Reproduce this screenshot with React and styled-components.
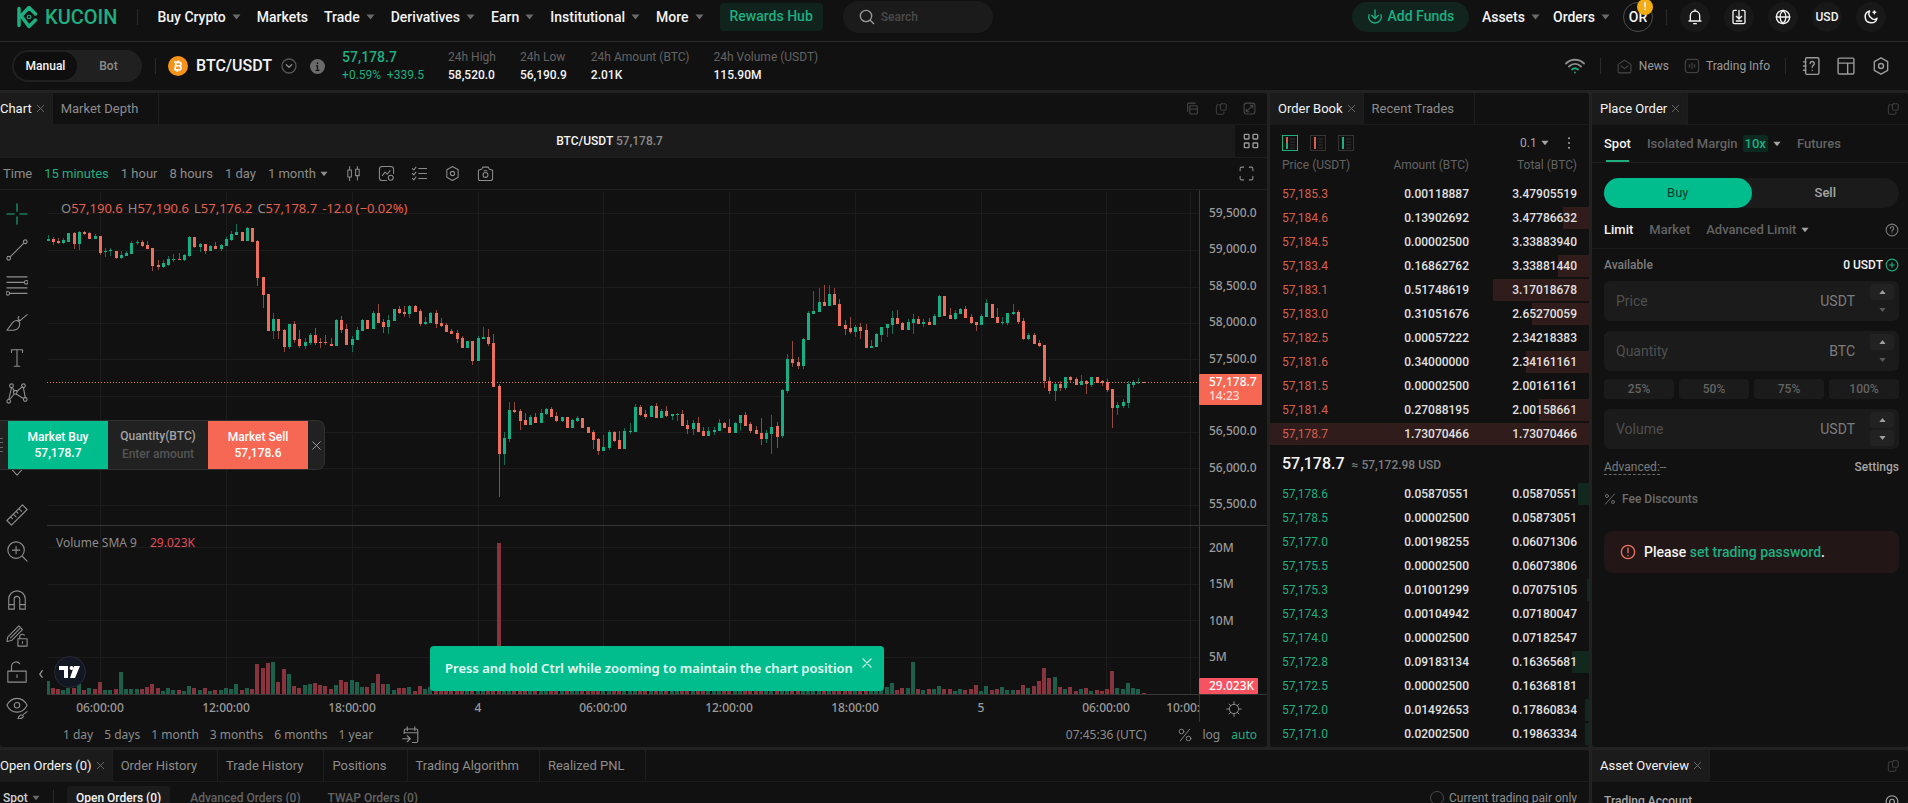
import React from "react";
import styled, { createGlobalStyle, css } from "styled-components";

const GREEN = "#01bc8d";
const GREEN_TEXT = "#1fae80";
const RED = "#f66754";
const INK = "#f3f3f3";
const DIM = "#8c8c8c";
const FAINT = "#636363";
const PANEL = "#111111";
const RAISED = "#1b1b1b";
const LINE = "#222222";
const CHART_FONT = '"Noto Sans", "Open Sans", sans-serif';

const GlobalStyle = createGlobalStyle`
  *, *::before, *::after { box-sizing: border-box; }
  body { margin: 0; background: ${LINE}; color: ${INK}; font: 400 12px/18px Roboto, "Liberation Sans", sans-serif; }
  button, input, select { font: inherit; color: inherit; background: none; border: 0; padding: 0; margin: 0; }
  button { cursor: pointer; white-space: nowrap; }
  a { color: inherit; text-decoration: none; }
  svg { display: block; flex: none; }
`;

/* ---------- icons ---------- */

const Icon = ({ d, size = 18, box = 24, w = 1.5, color = "currentColor", children }) => (
  <svg width={size} height={size} viewBox={`0 0 ${box} ${box}`} fill="none" stroke={color} strokeWidth={w} strokeLinecap="round" strokeLinejoin="round" aria-hidden="true">
    {d && <path d={d} />}
    {children}
  </svg>
);

const Arrow = ({ up, size = 9 }) => (
  <svg width={size} height="6" viewBox="0 0 9 6" fill="currentColor" aria-hidden="true">
    <path d={up ? "M4.5 .5 8.5 5.5h-8z" : "M.5 .5h8L4.5 5.5z"} />
  </svg>
);

const HEX = "M12 2.2 20 6.8v10.4L12 21.8 4 17.2V6.8z";
const CROSS = "M5 5l14 14M19 5L5 19";
const POPOUT = "M10 5H6a2 2 0 0 0-2 2v12a2 2 0 0 0 2 2h9a2 2 0 0 0 2-2v-2M13 3h6a2 2 0 0 1 2 2v7a2 2 0 0 1-2 2h-6a2 2 0 0 1-2-2V5a2 2 0 0 1 2-2z";

/* ---------- page frame ---------- */

const App_ = styled.div`
  display: flex;
  flex-direction: column;
  height: 100vh;
  overflow: hidden;
`;

const TopBar = styled.header`
  display: flex;
  align-items: center;
  justify-content: space-between;
  height: 42px;
  padding: 0 22px 7px 16px;
  background: ${PANEL};
  border-bottom: 1px solid #2c2c2c;
`;

const Row = styled.div`
  display: flex;
  align-items: center;
  gap: ${(p) => p.$gap || 0}px;
`;

const Brand = styled.a`
  display: flex;
  align-items: center;
  gap: 7px;
  color: ${GREEN_TEXT};
  font-size: 20px;
  font-weight: 500;
`;

const Divider = styled.span`
  width: 1px;
  height: ${(p) => p.$h || 16}px;
  background: #2a2a2a;
`;

const Nav = styled.nav`
  display: flex;
  align-items: center;
  gap: 16px;
  margin-left: 19px;
  font-size: 14px;
  font-weight: 500;
`;

const MenuButton = styled.button`
  display: flex;
  align-items: center;
  gap: 6px;
  font-size: 14px;
  font-weight: 500;
  svg { color: #6a6a6a; }
`;

const Rewards = styled.a`
  padding: 0 10px 2px;
  line-height: 26px;
  border-radius: 4px;
  background: #10231d;
  color: ${GREEN_TEXT};
`;

const SearchBox = styled.label`
  display: flex;
  align-items: center;
  gap: 6px;
  width: 150px;
  height: 32px;
  margin-left: 4px;
  padding: 0 16px;
  border-radius: 16px;
  background: ${RAISED};
  color: #9a9a9a;
  input { width: 90px; outline: 0; font-size: 12px; font-weight: 500; }
  input::placeholder { color: #4a4a4a; opacity: 1; }
`;

const Funds = styled.button`
  display: flex;
  align-items: center;
  justify-content: center;
  gap: 5px;
  width: 117px;
  height: 30px;
  border-radius: 15px;
  background: #11241e;
  color: ${GREEN_TEXT};
  font-size: 14px;
  font-weight: 500;
  padding-bottom: 2px;
`;

const Avatar = styled.button`
  position: relative;
  width: 30px;
  height: 30px;
  border: 1px solid #4c4c4c;
  border-radius: 50%;
  font-size: 14px;
  font-weight: 500;
`;

const Badge = styled.span`
  position: absolute;
  top: -4px;
  right: -1px;
  width: 16px;
  height: 16px;
  border-radius: 50%;
  background: #f2ad12;
  color: #fff;
  font-size: 10px;
  line-height: 16px;
`;

const Round = styled.button`
  display: flex;
  align-items: center;
  justify-content: center;
  width: 30px;
  height: 30px;
  border-radius: 50%;
  background: #181818;
  font-size: 12px;
  font-weight: 500;
`;

const PairBar = styled.div`
  display: flex;
  align-items: center;
  justify-content: space-between;
  height: 48px;
  padding: 0 17px 0 12px;
  background: ${PANEL};
`;

const Mode = styled.div`
  display: flex;
  width: 130px;
  height: 32px;
  padding: 2px;
  border-radius: 16px;
  background: #202020;
`;

const ModeButton = styled.button`
  flex: 1;
  border-radius: 14px;
  font-weight: 500;
  background: ${(p) => (p.$on ? "#0e0e0e" : "none")};
  color: ${(p) => (p.$on ? INK : DIM)};
`;

const PairName = styled.h1`
  margin: 0;
  font-size: 16px;
  font-weight: 500;
`;

const Stat = styled.div`
  color: ${FAINT};
  b { display: block; color: ${INK}; font-weight: 500; }
`;

const LastPrice = styled.div`
  color: ${GREEN_TEXT};
  b { display: block; font-size: 14px; font-weight: 500; }
`;

const ToolLink = styled.a`
  display: flex;
  align-items: center;
  gap: 6px;
  color: #9a9a9a;
  svg { color: #4a4a4a; }
`;

const Workspace = styled.main`
  display: grid;
  flex: 1;
  grid-template-columns: minmax(0, 1fr) 319px 316px;
  grid-template-rows: auto minmax(0, 1fr);
  gap: 3px;
  padding-top: 3px;
  min-height: 0;
`;

const Panel = styled.section`
  display: flex;
  flex-direction: column;
  min-width: 0;
  min-height: 0;
  overflow: hidden;
  background: ${PANEL};
  border-radius: 3px;
  grid-column: ${(p) => (p.$wide ? "span 2" : "auto")};
`;

/* ---------- tab strip ---------- */

const Strip = styled.div`
  display: flex;
  height: 32px;
  flex: none;
  align-items: stretch;
  border-bottom: 1px solid #1b1b1b;
`;

const TabButton = styled.button`
  padding: 0 ${(p) => (p.$on ? 6 : 20)}px 0 ${(p) => (p.$edge ? 0 : 8)}px;
  display: flex;
  align-items: center;
  gap: 3px;
  border-right: 1px solid #1e1e1e;
  font-size: 13px;
  font-weight: 400;
  color: ${(p) => (p.$on ? INK : DIM)};
  background: ${(p) => (p.$on ? RAISED : "none")};
  svg { color: #707070; }
`;

const StripTools = styled.div`
  display: flex;
  align-items: center;
  gap: 15px;
  margin-left: auto;
  padding-right: ${(p) => p.$pad || 8}px;
  color: #474747;
`;

const IconButton = styled.button`
  display: flex;
  align-items: center;
  justify-content: center;
`;

const Tabs = ({ items, edge, children, pad }) => (
  <Strip>
    {items.map((t, i) => (
      <TabButton key={t} $on={i === 0} $edge={edge && i === 0}>
        {t}
        {i === 0 && <Icon d={CROSS} size={11} w={2} />}
      </TabButton>
    ))}
    <StripTools $pad={pad}>{children}</StripTools>
  </Strip>
);

const PopOut = ({ label }) => (
  <IconButton aria-label={label}><Icon d={POPOUT} size={14} /></IconButton>
);

/* ---------- chart data ---------- */
/* direction, body top, body bottom, wick top, wick bottom; a unit is a third of a pixel */

const CANDLES = `G177,182,165,184 R177,186,170,194 R183,188,173,192 G181,189,173,192 G159,186,158,186 R158,191,157,206 G156,191,152,209 R155,161,153,166 R158,176,155,177 G168,177,163,178 R168,219,167,224 G212,216,204,232 G211,214,203,227 R213,234,212,236 G226,234,212,237 G218,228,212,229 G189,221,182,222 G185,189,180,194 R185,197,179,200 R195,206,183,208 R204,258,203,272 R256,262,241,269 G250,261,240,263 G237,256,229,257 G236,240,222,245 R236,240,219,240 G225,239,223,244 G171,228,168,230 R171,201,170,203 G192,200,190,216 R192,213,191,222 G199,212,194,213 R198,206,186,208 G195,207,192,213 G177,198,171,199 G161,179,152,184 G156,164,132,166 R156,182,155,184 G144,182,140,184 R144,186,143,187 R183,293,180,318 R291,345,290,383 R342,453,341,454 G417,452,400,476 R417,453,416,476 R450,501,447,517 G433,501,432,508 R432,480,422,490 R477,497,451,503 G486,497,474,508 G465,488,459,494 R465,489,445,495 R486,489,474,503 R486,489,464,496 R492,497,474,498 G420,497,418,498 R420,449,407,460 R447,495,432,496 G477,495,468,516 G450,480,440,480 G420,452,418,453 R420,447,419,448 G399,447,394,448 R399,429,373,430 R426,440,416,458 G420,440,406,461 G388,422,386,423 R387,398,378,402 R396,402,378,411 G378,401,375,413 R378,396,375,397 R393,432,388,437 G426,432,412,434 G399,429,396,430 R399,432,390,443 R429,438,414,440 R435,456,430,457 R453,462,447,463 R459,477,450,488 R474,503,468,504 G483,503,482,504 R483,543,482,555 G474,543,468,544 G471,477,441,478 R471,492,447,499 R489,621,463,622 R618,822,612,950 G774,822,755,855 G690,777,666,785 R690,696,666,699 R693,723,688,750 R720,735,699,736 G711,735,704,736 R711,729,699,730 G699,729,688,730 G687,702,684,706 R687,711,681,712 R708,723,697,727 G711,723,710,725 R711,744,710,745 G720,744,717,745 G714,723,708,727 R714,744,713,745 R741,759,740,760 R756,780,750,807 R777,813,773,825 G801,813,765,814 G756,804,750,811 R756,783,754,785 R780,807,752,808 G753,807,744,808 G753,756,729,762 G681,756,672,757 R681,705,674,708 R702,711,690,718 G678,711,676,712 R678,714,669,715 G693,714,687,715 R693,708,679,712 G702,708,702,720 G702,705,699,723 R702,738,690,739 R735,747,720,762 G729,747,720,765 R729,756,712,757 R753,768,741,769 G753,768,740,769 G750,756,742,766 G729,753,717,754 R729,744,727,745 R741,759,718,760 G729,759,726,760 G705,729,704,753 R705,738,697,739 R732,753,726,758 R750,762,738,763 R759,777,714,795 G759,777,750,788 G741,762,705,822 R738,771,726,804 G630,768,627,774 G537,633,522,640 R537,549,484,562 R546,558,530,567 G477,558,474,566 G399,480,394,481 G393,402,333,403 G366,396,324,397 R366,378,316,379 G342,378,316,379 R342,375,325,376 R372,438,358,439 R435,447,420,465 R444,456,412,462 G441,456,434,471 R441,453,430,476 R450,504,432,505 G498,504,480,505 G462,501,459,502 G441,465,440,486 G432,444,431,471 G414,435,393,462 R414,432,390,433 R429,450,426,451 G426,450,418,451 G417,429,402,462 R417,432,409,433 G426,432,416,441 R426,435,415,436 G408,435,403,436 G348,411,346,412 R348,408,347,409 R405,417,385,418 G399,417,391,421 G387,402,384,403 R387,414,379,415 R411,429,402,432 R426,435,426,452 G408,435,403,436 G369,411,357,412 R372,414,371,415 R411,429,385,430 G426,429,411,435 G399,429,398,435 G396,402,373,406 R396,426,391,432 R423,477,415,480 G465,477,460,480 R465,492,460,493 R489,498,480,501 R495,603,494,624 R603,633,590,642 G612,633,608,663 R612,624,602,632 G591,624,590,630 R591,600,588,606 R597,615,592,616 G603,615,585,616 R603,612,599,642 G591,615,590,621 R591,609,590,610 R603,609,600,618 R606,630,597,635 R627,684,626,744 G675,684,666,704 G666,678,656,684 G612,669,604,684 G606,615,600,624 G606,609,594,612 R606,609,606,609`
  .split(" ")
  .map((s) => ({ up: s[0] === "G", v: s.slice(1).split(",").map(Number) }));

const VOLUME_LEFT = "G39 R18 R15 G13 G18 R18 G30 R12 G18 R14 R36 G12 G12 R15 G66 G15 G15 G15 R15 R21 R30 R18 G9 G18 G12 R12 G10 G24 R18 G12 R18 G9 R12 G12 G18 G16 G30 R12 G18 R15 R90 R78 R93 G96 R36 R75 G60 R24 R18 G27 G30 R33 R27 R24 R15 G27 R42 R36 G42 G36 G21 R21 G33 R60 R30 G30 G12 R18 R18 G21 R9 R24 G15".split(" ");
const VOLUME_RIGHT = "G20 G33 R12 R18 G18 G96 R15 G12 R15 G15 G24 R15 R15 G9 G15 R12 R15 R27 G9 G24 R12 R15 G21 G12 G12 R12 R27 G18 R24 R38 R78 R48 G51 R21 G15 R21 R9 G15 R18 G9 R12 R9 R15 R69 G18 G15 G33 G18 G15 R3".split(" ");
const VOLUME = CANDLES.map((c, i) => {
  const tag = i < 73 ? VOLUME_LEFT[i] : i >= 160 ? VOLUME_RIGHT[i - 160] : null;
  if (tag) return { up: tag[0] === "G", h: Number(tag.slice(1)) / 3 };
  return { up: c.up, h: i === 86 ? 151 : 6 + ((i * 7) % 5) };
});

const xOf = (i) => 1 + Math.floor(i * 5.245);
const H_LINES = [23, 60, 97, 133, 169, 206, 242, 278, 315, 357, 394, 430, 467];
const V_LINES = [53, 179, 305, 431, 556, 682, 808, 934, 1059, 1143];
const TIMES = [[53, "06:00:00"], [179, "12:00:00"], [305, "18:00:00"], [431, "4"], [556, "06:00:00"], [682, "12:00:00"], [808, "18:00:00"], [934, "5"], [1059, "06:00:00"], [1143, "10:00:00"]];
const PRICES = [[23, "59,500.0"], [59, "59,000.0"], [96, "58,500.0"], [132, "58,000.0"], [169, "57,500.0"], [241, "56,500.0"], [278, "56,000.0"], [314, "55,500.0"], [358, "20M"], [394, "15M"], [431, "10M"], [467, "5M"]];

/* ---------- chart ---------- */

const TitleRow = styled.div`
  display: flex;
  height: 32px;
  flex: none;
`;

const TitleBar = styled.div`
  flex: 1;
  text-align: center;
  line-height: 32px;
  font-weight: 500;
  background: ${RAISED};
  color: ${DIM};
  padding-right: 16px;
  b { color: ${INK}; font-weight: 500; }
`;

const GridToggle = styled.button`
  display: flex;
  align-items: center;
  justify-content: center;
  width: 32px;
  color: #9a9a9a;
`;

const Toolbar = styled.div`
  display: flex;
  align-items: center;
  height: 33px;
  flex: none;
  gap: 12px;
  padding: 0 12px 0 3px;
  border-top: 1px solid #1c1c1c;
  border-bottom: 1px solid #202020;
  color: ${DIM};
`;

const Interval = styled.button`
  display: flex;
  align-items: center;
  gap: 4px;
  font-size: 13px;
  color: ${(p) => (p.$on ? GREEN_TEXT : DIM)};
`;

const ChartTools = styled.div`
  display: flex;
  align-items: center;
  gap: 16px;
  margin-left: 5px;
  margin-right: auto;
`;

const ChartBody = styled.div`
  position: relative;
  display: flex;
  flex: 1;
`;

const Rail = styled.div`
  display: flex;
  flex-direction: column;
  width: 47px;
  padding: 6px 13px 0 0;
  color: #8f8f8f;
`;

const Tool = styled.button`
  display: flex;
  align-items: center;
  justify-content: center;
  height: 36px;
  margin-top: ${(p) => (p.$apart ? 13 : 0)}px;
  color: ${(p) => (p.$on ? GREEN_TEXT : "inherit")};
`;

const ChartMain = styled.div`
  position: relative;
  display: flex;
  flex: 1;
  flex-direction: column;
  min-width: 0;
  font-family: ${CHART_FONT};
  color: ${DIM};
`;

const PlotRow = styled.div`
  display: flex;
  height: 505px;
  text { font: 500 12px ${CHART_FONT}; }
`;

const Plot = styled.div`
  flex: 1;
  min-width: 0;
`;

const PriceAxis = styled.div`
  width: 68px;
`;

const TimeRow = styled.div`
  display: flex;
  height: 27px;
  text { font: 500 12px ${CHART_FONT}; }
`;

const AxisCorner = styled.button`
  display: flex;
  align-items: center;
  justify-content: center;
  width: 68px;
  border-left: 1px solid #333;
`;

const RangeRow = styled.div`
  display: flex;
  align-items: center;
  height: 25px;
  gap: 11px;
  padding: 0 10px 0 16px;
`;

const Legend = styled.div`
  position: absolute;
  left: ${(p) => p.$left}px;
  top: ${(p) => p.$top}px;
  display: flex;
  gap: ${(p) => p.$gap}px;
  font-size: ${(p) => p.$size}px;
  white-space: nowrap;
  em { font-style: normal; color: #e5604f; }
  i { font-style: normal; color: #e04c5a; }
`;

const Watermark = styled.a`
  position: absolute;
  left: 7px;
  top: 466px;
  display: flex;
  align-items: center;
  justify-content: center;
  width: 32px;
  height: 32px;
  border-radius: 50%;
  border: 1px solid #262b38;
  background: #131722;
`;

const Collapse = styled.button`
  position: absolute;
  left: 36px;
  top: 479px;
  color: #9a9a9a;
`;

const Toast = styled.div`
  position: absolute;
  left: 50%;
  top: 456px;
  transform: translateX(-50%);
  display: flex;
  justify-content: space-between;
  width: 454px;
  height: 45px;
  padding: 0 10px 0 15px;
  border-radius: 4px;
  background: ${GREEN};
  color: #e4fff6;
  font-size: 13px;
  font-weight: 600;
  line-height: 44px;
  white-space: nowrap;
  button { height: 34px; }
`;

const QuickTrade = styled.div`
  position: absolute;
  left: 0;
  top: 230px;
  display: flex;
  align-items: center;
  height: 50px;
  border: 1px solid #303030;
  border-left: 0;
  border-radius: 0 8px 8px 0;
  background: #212121;
`;

const Grip = styled.span`
  display: flex;
  flex-direction: column;
  gap: 4px;
  width: 8px;
  &::before, &::after { content: ""; width: 3px; height: 5px; border: solid #666; border-width: 1px 0; }
`;

const QuickButton = styled.button`
  width: 100px;
  height: 48px;
  line-height: 16px;
  font-weight: 500;
  color: #fff;
  background: ${(p) => p.$bg};
`;

const QuickField = styled.label`
  display: block;
  width: 100px;
  text-align: center;
  font-weight: 500;
  color: #a3a3a3;
  input { width: 90px; text-align: center; outline: 0; }
  input::placeholder { color: #555; opacity: 1; }
`;

const QuickClose = styled.button`
  display: flex;
  justify-content: center;
  width: 16px;
  color: #b5b5b5;
`;

const PlotDrawing = () => (
  <svg width="100%" height="505" viewBox="0 0 1152 505" preserveAspectRatio="none" shapeRendering="crispEdges" role="img" aria-label="BTC/USDT 15 minute candles and volume">
    {H_LINES.map((y) => <path key={y} d={`M1 ${y}.5H1152`} stroke="#1c1c1c" />)}
    {V_LINES.map((x) => <path key={x} d={`M${x}.5 2V505`} stroke="#1c1c1c" />)}
    <path d="M0 335.5H1152" stroke="#353535" />
    {VOLUME.map((b, i) => (
      <rect key={i} x={xOf(i) - 2} y={Math.round(504 - b.h)} width="4" height={Math.max(1, Math.round(b.h))} fill={b.up ? "#1c604c" : "#87343e"} />
    ))}
    {CANDLES.map(({ up, v: [t, b, h, l] }, i) => {
      const y = (n) => Math.round(n / 3) - 10;
      return (
        <g key={i} fill={up ? "#18ae85" : "#ea6f5f"}>
          <rect x={xOf(i)} y={y(h)} width="1" height={Math.max(1, y(l) - y(h))} opacity="0.6" />
          <rect x={xOf(i) - 1} y={y(t)} width="3" height={Math.max(1, y(b) - y(t))} />
        </g>
      );
    })}
    <path d="M0 192.5H1152" stroke="#d97a6e" strokeDasharray="1 2" />
    <path d="M0 504.5H1152" stroke="#383838" />
  </svg>
);

const PriceScale = () => (
  <svg width="68" height="505" fill="#9a9a9a">
    <path d="M.5 0V505" stroke="#383838" />
    <path d="M0 335.5H68M0 504.5H68" stroke="#353535" />
    {PRICES.map(([y, t]) => <text key={t} x="10" y={y + 4}>{t}</text>)}
    <rect x="0" y="184" width="63" height="31" rx="1" fill={RED} />
    <text x="10" y="196" fill="#fff">57,178.7</text>
    <text x="10" y="210" fill="#ffdcd6">14:23</text>
    <rect x="0" y="488" width="59" height="16" rx="1" fill="#f7525f" />
    <text x="10" y="500" fill="#fff">29.023K</text>
  </svg>
);

const TOOLS = [
  ["Crosshair", <path d="M12 1v8M12 15v8M1 12h8M15 12h8" />],
  ["Trend line", <><circle cx="21" cy="3" r="2" /><circle cx="3" cy="21" r="2" /><path d="M4.5 19.5l15-15" /></>],
  ["Fib retracement", <><path d="M1 2h22M1 8h19M1 14h22M4 20h19" /><circle cx="22" cy="8" r="2" /><circle cx="2" cy="20" r="2" /></>],
  ["Brush", <><path d="M1 21l6-8c3-4 8-3 8 1 0 5-4 7-8 7zM23 4l-7 6c-2 1-4-2-2-4" /></>],
  ["Text", <path d="M6 6V3h12v3M12 3v18M9 21h6" />],
  ["Patterns", <><circle cx="6" cy="3" r="2" /><circle cx="19" cy="3" r="2" /><circle cx="10" cy="10" r="2" /><circle cx="3" cy="20" r="2" /><circle cx="21" cy="18" r="2" /><path d="M6 5l-3 13M7 5l2 4M12 9l6-5M19 5l2 11M11 12l8 5M9 12l-5 6" /></>],
  ["Forecast", <path d="M3 4h18M3 12h18M3 20h18" />],
  ["Icons", <path d="M12 22L3 12C-1 6 8 1 12 7c4-6 13-1 9 5z" />],
  ["Measure", <><path d="M1 18L18 1l5 5L6 23zM5 14l2 2M8 11l3 3M11 8l2 2M14 5l3 3" /></>, true],
  ["Zoom in", <><circle cx="11" cy="11" r="9" /><path d="M11 7v8M7 11h8M18 18l5 5" /></>],
  ["Magnet", <><path d="M3 22V11a9 9 0 0 1 18 0v11h-6V11a3 3 0 0 0-6 0v11zM3 17h6M15 17h6" /></>, true],
  ["Stay in drawing mode", <><path d="M1 18l1-5L14 1l4 4L6 17zM5 14L15 4M13 15h10v8H13zM15 15v-3a3 3 0 0 1 5-1M18 18v2" /></>],
  ["Lock drawings", <><path d="M2 11h20v12H2zM6 11V6a5 5 0 0 1 9-3M12 15v3" /></>],
  ["Hide drawings", <><path d="M1 9c5-10 17-10 22 0-5 10-17 10-22 0z" /><circle cx="12" cy="9" r="3" /><path d="M13 24c1-4 3-5 5-4s0 4-5 4zM19 19l4-3" /></>],
];

const ChartPanel = () => (
  <Panel>
    <Tabs items={["Chart", "Market Depth"]} edge pad={11}>
      <IconButton aria-label="Duplicate"><Icon size={13} d="M7 7h12a2 2 0 0 1 2 2v11a2 2 0 0 1-2 2H9a2 2 0 0 1-2-2zM7 13h14M3 17V4a2 2 0 0 1 2-2h12" w={2} /></IconButton>
      <PopOut label="Pop out chart" />
      <IconButton aria-label="Maximize"><Icon size={13} d="M7 2h10a5 5 0 0 1 5 5v10a5 5 0 0 1-5 5H7a5 5 0 0 1-5-5V7a5 5 0 0 1 5-5zM7 17L17 7M13 6h5v5M6 13v5h5" w={2} /></IconButton>
    </Tabs>
    <TitleRow>
      <TitleBar><b>BTC/USDT</b> 57,178.7</TitleBar>
      <GridToggle aria-label="Chart layout"><Icon size={16} d="M3 2h5a1 1 0 0 1 1 1v5a1 1 0 0 1-1 1H3a1 1 0 0 1-1-1V3a1 1 0 0 1 1-1zM16 2h5a1 1 0 0 1 1 1v5a1 1 0 0 1-1 1h-5a1 1 0 0 1-1-1V3a1 1 0 0 1 1-1zM3 15h5a1 1 0 0 1 1 1v5a1 1 0 0 1-1 1H3a1 1 0 0 1-1-1v-5a1 1 0 0 1 1-1zM16 15h5a1 1 0 0 1 1 1v5a1 1 0 0 1-1 1h-5a1 1 0 0 1-1-1v-5a1 1 0 0 1 1-1z" w={2} /></GridToggle>
    </TitleRow>
    <Toolbar>
      {["Time", "15 minutes", "1 hour", "8 hours", "1 day"].map((t, i) => <Interval key={t} $on={i === 1}>{t}</Interval>)}
      <Interval>1 month <Arrow size={8} /></Interval>
      <ChartTools>
        <IconButton aria-label="Candle style"><Icon size={17} d="M4 7h5v10H4zM6.500 2v5M6.500 17v5M15 6h5v9h-5zM17.500 2v4M17.500 15v6" /></IconButton>
        <IconButton aria-label="Indicators"><Icon size={17} d="M12 22H6a4 4 0 0 1-4-4V6a4 4 0 0 1 4-4h12a4 4 0 0 1 4 4v6M6 15l4-5 3 3 4-5"><circle cx="18" cy="18" r="3.500" /></Icon></IconButton>
        <IconButton aria-label="Orders on chart"><Icon size={17} d="M2 5l2 2 3-4M2 12l2 2 3-4M2 19l2 2 3-4M11 5h11M11 12h11M11 19h11" /></IconButton>
        <IconButton aria-label="Chart settings"><Icon size={17} d={HEX}><circle cx="12" cy="12" r="3" /></Icon></IconButton>
        <IconButton aria-label="Snapshot"><Icon size={17} d="M8 3h8l1 2.500 5 2V19a3 3 0 0 1-3 3H5a3 3 0 0 1-3-3V7.500l5-2z"><circle cx="12" cy="14" r="3.500" /><path d="M10 8h4" /></Icon></IconButton>
      </ChartTools>
      <IconButton aria-label="Full screen"><Icon size={17} d="M3 8V5a2 2 0 0 1 2-2h3M16 3h3a2 2 0 0 1 2 2v3M21 16v3a2 2 0 0 1-2 2h-3M8 21H5a2 2 0 0 1-2-2v-3" /></IconButton>
    </Toolbar>
    <ChartBody>
      <Rail>
        {TOOLS.map(([label, art, apart], i) => (
          <Tool key={label} aria-label={label} $on={i === 0} $apart={apart}><Icon size={22} w={1.2}>{art}</Icon></Tool>
        ))}
      </Rail>
      <Collapse aria-label="Hide toolbar"><Icon size={10} d="M15 4L9 12l6 8" w={3} /></Collapse>
      <ChartMain>
        <PlotRow>
          <Plot><PlotDrawing /></Plot>
          <PriceAxis><PriceScale /></PriceAxis>
        </PlotRow>
        <TimeRow>
          <Plot>
            <svg width="100%" height="27" fill="#9a9a9a" textAnchor="middle">
              {TIMES.map(([x, t]) => <text key={x} x={`${(x / 1152) * 100}%`} y="17">{t}</text>)}
            </svg>
          </Plot>
          <AxisCorner aria-label="Scale settings"><Icon size={16}><circle cx="12" cy="12" r="7" /><path d="M12 5V1M12 19v4M5 12H1M19 12h4M7 7L4.500 4.500M17 7l2.500-2.500M7 17l-2.500 2.500M17 17l2.500 2.500" /></Icon></AxisCorner>
        </TimeRow>
        <RangeRow>
          {["1 day", "5 days", "1 month", "3 months", "6 months", "1 year"].map((t) => <button key={t}>{t}</button>)}
          <ChartRangeIcon aria-label="Go to date"><Icon size={18} d="M3 10V6a2 2 0 0 1 2-2h14a2 2 0 0 1 2 2v14a2 2 0 0 1-2 2h-5M3 9h18M7 1v5M17 1v5M1 17h9M7 13l4 4-4 4" /></ChartRangeIcon>
          <Clock>07:45:36 (UTC)</Clock>
          <Icon size={14} w={1.6}><circle cx="6" cy="6" r="4" /><circle cx="18" cy="18" r="4" /><path d="M20 2L4 22" /></Icon>
          <button>log</button>
          <AutoButton>auto</AutoButton>
        </RangeRow>
        <Legend $left={14} $top={9} $gap={5} $size={13}>
          {[["O", "57,190.6"], ["H", "57,190.6"], ["L", "57,176.2"], ["C", "57,178.7"]].map(([k, v]) => <span key={k}>{k}<em>{v}</em></span>)}
          <em>-12.0 (−0.02%)</em>
        </Legend>
        <Legend $left={9} $top={344} $gap={13} $size={12}><span>Volume SMA 9</span><i>29.023K</i></Legend>
        <Watermark href="#" aria-label="TradingView"><svg width="22" height="14" viewBox="0 0 22 14" fill="#fff"><path d="M0 1h9v12H5V5H0zM15 1h6l-5 12h-5z" /><circle cx="12.500" cy="3" r="2" /></svg></Watermark>
        <Toast role="status">Press and hold Ctrl while zooming to maintain the chart position<button aria-label="Dismiss"><Icon size={14} d={CROSS} w={2} /></button></Toast>
      </ChartMain>
      <QuickTrade>
        <Grip />
        <QuickButton $bg={GREEN}>Market Buy<br />57,178.7</QuickButton>
        <QuickField>Quantity(BTC)<input placeholder="Enter amount" /></QuickField>
        <QuickButton $bg={RED}>Market Sell<br />57,178.6</QuickButton>
        <QuickClose aria-label="Close quick trade"><Icon size={13} d={CROSS} /></QuickClose>
      </QuickTrade>
    </ChartBody>
  </Panel>
);

const ChartRangeIcon = styled.button`
  margin-left: 18px;
`;

const Clock = styled.span`
  margin-left: auto;
  margin-right: 20px;
`;

const AutoButton = styled.button`
  color: ${GREEN_TEXT};
`;

/* ---------- order book ---------- */

const ASKS = [
  ["57,185.3", "0.00118887", "3.47905519", 0], ["57,184.6", "0.13902692", "3.47786632", 26], ["57,184.5", "0.00002500", "3.33883940", 0],
  ["57,183.4", "0.16862762", "3.33881440", 31], ["57,183.1", "0.51748619", "3.17018678", 96], ["57,183.0", "0.31051676", "2.65270059", 57],
  ["57,182.5", "0.00057222", "2.34218383", 0], ["57,181.6", "0.34000000", "2.34161161", 63], ["57,181.5", "0.00002500", "2.00161161", 0],
  ["57,181.4", "0.27088195", "2.00158661", 50], ["57,178.7", "1.73070466", "1.73070466", 319],
];
const BIDS = [
  ["57,178.6", "0.05870551", "0.05870551", 11], ["57,178.5", "0.00002500", "0.05873051", 0], ["57,177.0", "0.00198255", "0.06071306", 0],
  ["57,175.5", "0.00002500", "0.06073806", 0], ["57,175.3", "0.01001299", "0.07075105", 2], ["57,174.3", "0.00104942", "0.07180047", 0],
  ["57,174.0", "0.00002500", "0.07182547", 0], ["57,172.8", "0.09183134", "0.16365681", 17], ["57,172.5", "0.00002500", "0.16368181", 0],
  ["57,172.0", "0.01492653", "0.17860834", 4], ["57,171.0", "0.02002500", "0.19863334", 4],
];

const BookTools = styled.div`
  display: flex;
  align-items: center;
  height: 31px;
  gap: 12px;
  padding: 5px 12px 0;
`;

const BookView = styled.button`
  width: 16px;
  height: 16px;
  border: 1px solid ${(p) => (p.$on ? GREEN_TEXT : "#333")};
`;

const PrecisionPick = styled.label`
  display: flex;
  align-items: center;
  gap: 3px;
  margin-left: auto;
  color: #a5a5a5;
  select { appearance: none; outline: 0; width: 18px; font-size: 12px; }
`;

const BookTable = styled.table`
  width: 100%;
  table-layout: fixed;
  border-collapse: collapse;
  th { height: 26px; padding: 0; vertical-align: top; text-align: right; font-weight: 400; color: ${FAINT}; }
  td { height: 24px; padding: 0; text-align: right; font-weight: 500; color: #e0e0e0; }
  th:nth-child(1), td:nth-child(1) { width: 90px; padding-left: 12px; text-align: left; }
  th:nth-child(2) { width: 109px; }
  th:nth-child(3), td:nth-child(3) { padding-right: 12px; }
`;

const BookRow = styled.tr`
  background: linear-gradient(${(p) => (p.$buy ? "#12281f, #12281f" : "#301c1a, #301c1a")}) right center / var(--depth) 22px no-repeat;
  td:first-child { font-weight: 400; color: ${(p) => (p.$buy ? GREEN_TEXT : "#d65f4f")}; }
`;

const MidCell = styled.td`
  && { height: 36px; }
  color: ${FAINT};
  b { margin-right: 7px; font-size: 16px; font-weight: 500; color: ${INK}; }
  span { color: #7c7c7c; }
`;

const Rows = ({ data, buy }) => (
  <tbody>
    {data.map(([p, a, t, d]) => (
      <BookRow key={p} $buy={buy} style={{ "--depth": `${(d / 319) * 100}%` }}><td>{p}</td><td>{a}</td><td>{t}</td></BookRow>
    ))}
  </tbody>
);

const ViewArt = ({ top, bottom }) => (
  <svg width="14" height="14" viewBox="0 0 14 14" strokeWidth="2">
    <path d="M4 1v6" stroke={top} /><path d="M4 7v6" stroke={bottom} />
    <path d="M7 3h5M7 6h5M7 9h5M7 12h5" stroke="#333" strokeWidth="1" />
  </svg>
);

const BookPanel = () => (
  <Panel>
    <Tabs items={["Order Book", "Recent Trades"]} />
    <BookTools>
      <BookView $on aria-label="Both sides"><ViewArt top="#d65f4f" bottom={GREEN_TEXT} /></BookView>
      <BookView aria-label="Asks only"><ViewArt top="#d65f4f" bottom="#d65f4f" /></BookView>
      <BookView aria-label="Bids only"><ViewArt top={GREEN_TEXT} bottom={GREEN_TEXT} /></BookView>
      <PrecisionPick><select aria-label="Precision"><option>0.1</option></select><Arrow size={8} /></PrecisionPick>
      <IconButton aria-label="More options"><Icon size={16} color="none"><g fill="#a5a5a5"><circle cx="12" cy="5" r="1.500" /><circle cx="12" cy="12" r="1.500" /><circle cx="12" cy="19" r="1.500" /></g></Icon></IconButton>
    </BookTools>
    <BookTable>
      <thead><tr><th>Price (USDT)</th><th>Amount (BTC)</th><th>Total (BTC)</th></tr></thead>
      <Rows data={ASKS} />
      <tbody><tr><MidCell colSpan={3}><b>57,178.7</b><span>≈ 57,172.98 USD</span></MidCell></tr></tbody>
      <Rows data={BIDS} buy />
    </BookTable>
  </Panel>
);

/* ---------- order form ---------- */

const Markets = styled.div`
  display: flex;
  align-items: center;
  height: 38px;
  gap: 16px;
  padding: 0 12px;
  border-bottom: 1px solid #1e1e1e;
`;

const MarketTab = styled.button`
  position: relative;
  display: flex;
  align-items: center;
  gap: 5px;
  height: 36px;
  font-size: 13px;
  font-weight: 500;
  color: ${(p) => (p.$on ? INK : FAINT)};
  svg { color: #a5a5a5; }
  ${(p) => p.$underline && css`
    &::after { content: ""; position: absolute; left: 2px; right: 2px; bottom: 0; height: 2px; background: ${GREEN_TEXT}; }
  `}
`;

const Leverage = styled.span`
  padding: 0 2px;
  line-height: 17px;
  border-radius: 2px;
  background: #0d2a20;
  color: ${GREEN_TEXT};
`;

const Form = styled.form`
  display: flex;
  flex-direction: column;
  padding: 15px 9px 0 12px;
`;

const Sides = styled.div`
  display: flex;
  height: 30px;
  border-radius: 15px;
  background: ${RAISED};
`;

const Side = styled.button`
  flex: 1;
  border-radius: 15px;
  font-size: 13px;
  font-weight: ${(p) => (p.$on ? 400 : 500)};
  background: ${(p) => (p.$on ? GREEN : "none")};
  color: ${(p) => (p.$on ? "#0b3b2e" : "#a5a5a5")};
`;

const Types = styled.div`
  display: flex;
  align-items: center;
  gap: 16px;
  height: 41px;
  margin: 0 -9px 0 -12px;
  padding: 3px 9px 0 12px;
  border-bottom: 1px solid #1b1b1b;
  color: #777;
  > :last-child { margin-left: auto; }
`;

const Available = styled.div`
  display: flex;
  align-items: center;
  height: 32px;
  gap: 2px;
  font-weight: 500;
  color: #7c7c7c;
  b { margin-left: auto; font-weight: 500; color: ${INK}; }
  button { color: ${GREEN_TEXT}; }
`;

const Field = styled.label`
  display: flex;
  align-items: center;
  height: 40px;
  margin-bottom: ${(p) => p.$after}px;
  padding: 0 5px 0 12px;
  border-radius: 6px;
  background: ${RAISED};
  color: #7c7c7c;
  font-size: 14px;
  input { flex: 1; min-width: 0; outline: 0; color: ${INK}; }
  input::placeholder { color: #4f4f4f; opacity: 1; }
`;

const Stepper = styled.span`
  display: flex;
  flex-direction: column;
  gap: 2px;
  margin-left: 15px;
  button { display: flex; align-items: center; justify-content: center; width: 24px; height: 16px; border-radius: 3px; background: #222; color: #a0a0a0; }
  button:last-child { background: ${(p) => (p.$live ? "#222" : "none")}; color: ${(p) => (p.$live ? "#a0a0a0" : "#5a5a5a")}; }
`;

const Shares = styled.div`
  display: flex;
  gap: 5px;
  margin-bottom: 10px;
  button { flex: 1; height: 20px; border-radius: 4px; background: ${RAISED}; color: ${FAINT}; font-weight: 500; }
`;

const Footer = styled.div`
  display: flex;
  align-items: center;
  justify-content: space-between;
  height: 35px;
  color: #7c7c7c;
  u { text-decoration: none; border-bottom: 1px dashed #6a6a6a; }
  button { font-weight: 500; color: #a5a5a5; }
`;

const Discounts = styled.a`
  display: flex;
  align-items: center;
  gap: 6px;
  height: 30px;
  font-weight: 500;
  color: #6c6c6c;
`;

const Notice = styled.p`
  display: flex;
  align-items: center;
  gap: 8px;
  height: 42px;
  margin: 17px 0 0;
  padding: 0 16px;
  border-radius: 8px;
  background: #221617;
  font-size: 14px;
  font-weight: 500;
  a { color: ${GREEN_TEXT}; }
  svg { color: #e8715f; }
`;

const AmountField = ({ label, unit, after, live }) => (
  <Field $after={after}>
    <input placeholder={label} aria-label={label} />
    {unit}
    <Stepper $live={live}>
      <button type="button" aria-label={`Raise ${label}`}><Arrow up size={7} /></button>
      <button type="button" aria-label={`Lower ${label}`}><Arrow size={7} /></button>
    </Stepper>
  </Field>
);

const PercentArt = () => <Icon size={12} w={2}><circle cx="6" cy="6" r="3" /><circle cx="18" cy="18" r="3" /><path d="M21 2L3 22" /></Icon>;

const OrderPanel = () => (
  <Panel>
    <Tabs items={["Place Order"]}><PopOut label="Pop out order form" /></Tabs>
    <Markets>
      <MarketTab $on $underline>Spot</MarketTab>
      <MarketTab>Isolated Margin <Leverage>10x</Leverage><Arrow size={8} /></MarketTab>
      <MarketTab>Futures</MarketTab>
    </Markets>
    <Form onSubmit={(e) => e.preventDefault()}>
      <Sides><Side type="button" $on>Buy</Side><Side type="button">Sell</Side></Sides>
      <Types>
        <MarketTab type="button" $on>Limit</MarketTab>
        <MarketTab type="button">Market</MarketTab>
        <MarketTab type="button">Advanced Limit <Arrow size={8} /></MarketTab>
        <IconButton type="button" aria-label="Help"><Icon size={14} w={2}><circle cx="12" cy="12" r="10" /><path d="M9 9.500a3 3 0 1 1 4 2.700c-1 .5-1 1-1 1.800M12 17v.2" /></Icon></IconButton>
      </Types>
      <Available>Available<b>0 USDT</b><IconButton type="button" aria-label="Add funds"><Icon size={14} w={2}><circle cx="12" cy="12" r="10" /><path d="M12 8v8M8 12h8" /></Icon></IconButton></Available>
      <AmountField label="Price" unit="USDT" after={10} />
      <AmountField label="Quantity" unit="BTC" after={8} />
      <Shares>{["25%", "50%", "75%", "100%"].map((s) => <button type="button" key={s}>{s}</button>)}</Shares>
      <AmountField label="Volume" unit="USDT" after={0} live />
      <Footer><span><u>Advanced:</u>--</span><button type="button">Settings</button></Footer>
      <Discounts href="#"><PercentArt />Fee Discounts</Discounts>
      <Notice>
        <Icon size={16} w={2}><circle cx="12" cy="12" r="10" /><path d="M12 6v7M12 17v.5" /></Icon>
        <span>Please <a href="#">set trading password</a>.</span>
      </Notice>
    </Form>
  </Panel>
);

/* ---------- bottom panels ---------- */

const OrdersBar = styled.div`
  display: flex;
  align-items: center;
  flex: none;
  height: 32px;
  gap: 13px;
  padding: 0 12px 0 3px;
  font-weight: 500;
`;

const ProductPick = styled.label`
  display: flex;
  align-items: center;
  gap: 3px;
  color: #6a6a6a;
  select { appearance: none; outline: 0; width: 26px; font-size: 12px; color: #d0d0d0; }
`;

const Chip = styled.button`
  height: 24px;
  padding: 0 ${(p) => (p.$on ? 9 : 7)}px;
  border-radius: 4px;
  font-weight: 500;
  background: ${(p) => (p.$on ? RAISED : "none")};
  color: ${(p) => (p.$on ? INK : FAINT)};
`;

const PairOnly = styled.label`
  display: flex;
  align-items: center;
  gap: 5px;
  margin-left: auto;
  font-weight: 400;
  color: ${DIM};
  input { appearance: none; width: 14px; height: 14px; border: 1px solid #4a4a4a; border-radius: 50%; }
`;

const AccountRow = styled.div`
  display: flex;
  align-items: center;
  justify-content: space-between;
  flex: none;
  height: 38px;
  padding: 0 9px 0 12px;
  font-weight: 500;
  color: #a5a5a5;
`;

const OrdersPanel = () => (
  <Panel $wide>
    <Tabs edge items={["Open Orders (0)", "Order History", "Trade History", "Positions", "Trading Algorithm", "Realized PNL"]} />
    <OrdersBar>
      <ProductPick><select aria-label="Product"><option>Spot</option></select><Arrow size={8} /></ProductPick>
      <Divider />
      <Chip $on>Open Orders (0)</Chip>
      <Chip>Advanced Orders (0)</Chip>
      <Chip>TWAP Orders (0)</Chip>
      <PairOnly><input type="checkbox" />Current trading pair only</PairOnly>
    </OrdersBar>
  </Panel>
);

const AssetPanel = () => (
  <Panel>
    <Tabs items={["Asset Overview"]}><PopOut label="Pop out assets" /></Tabs>
    <AccountRow>Trading Account<IconButton aria-label="Hide balances"><Icon size={14} w={2}><circle cx="12" cy="13" r="10" /><circle cx="12" cy="13" r="4" /></Icon></IconButton></AccountRow>
  </Panel>
);

/* ---------- top bars ---------- */

const Header = () => (
  <TopBar>
    <Row $gap={20}>
      <Brand href="#">
        <svg width="22" height="24" viewBox="0 0 22 24" fill="none" stroke={GREEN_TEXT} strokeWidth="3.500" strokeLinecap="round" strokeLinejoin="round" aria-hidden="true">
          <path d="M3 3.500v17M4 12l9-9.500 6.500 6.500M6 12l7 9.500 6.500-6.500" />
          <circle cx="13" cy="12" r=".6" />
        </svg>
        KUCOIN
      </Brand>
      <Divider />
    </Row>
    <Nav>
      <MenuButton>Buy Crypto <Arrow /></MenuButton>
      <a href="#">Markets</a>
      {["Trade", "Derivatives", "Earn", "Institutional", "More"].map((t) => <MenuButton key={t}>{t} <Arrow /></MenuButton>)}
      <Rewards href="#">Rewards Hub</Rewards>
      <SearchBox><Icon size={16} w={2}><circle cx="10.500" cy="10.500" r="8.500" /><path d="M17 17l5 5" /></Icon><input type="search" placeholder="Search" aria-label="Search" /></SearchBox>
    </Nav>
    <RightSide>
      <Funds><Icon size={16} w={2} d="M12 3v12M7 11l5 5 5-5M3 10a9.500 9.500 0 1 0 18 0" />Add Funds</Funds>
      <MenuButton>Assets <Arrow /></MenuButton>
      <MenuButton>Orders <Arrow /></MenuButton>
      <Avatar>OR<Badge>!</Badge></Avatar>
      <Divider />
      <Row $gap={14}>
        <Round aria-label="Notifications"><Icon size={16} w={2} d="M5 18V10a7 7 0 0 1 14 0v8M3 18h18M10 22h4M12 3V1" /></Round>
        <Round aria-label="Download"><Icon size={16} w={2} d="M8 2H5a2 2 0 0 0-2 2v16a2 2 0 0 0 2 2h14a2 2 0 0 0 2-2V4a2 2 0 0 0-2-2h-3M12 2v12M8 11l4 4 4-4M8 18h8" /></Round>
        <Round aria-label="Language"><Icon size={16} w={2}><circle cx="12" cy="12" r="10" /><path d="M2 12h20M12 2c-6 6-6 14 0 20M12 2c6 6 6 14 0 20" /></Icon></Round>
        <Round>USD</Round>
        <Round aria-label="Dark theme"><Icon size={16} w={2.2} d="M10 3a9 9 0 1 0 11 11 6 6 0 0 1-9-1 7 7 0 0 1-2-10zM17 3v4M15 5h4" /></Round>
      </Row>
    </RightSide>
  </TopBar>
);

const RightSide = styled.div`
  display: flex;
  align-items: center;
  gap: 13px;
  margin-left: auto;
`;

const PairInfo = styled.div`
  display: flex;
  align-items: center;
  gap: 24px;
  margin-left: 17px;
`;

const PairHeader = () => (
  <PairBar>
    <Row>
      <Mode><ModeButton $on>Manual</ModeButton><ModeButton>Bot</ModeButton></Mode>
      <PairTitle>
        <Divider />
        <Row $gap={8}>
          <svg width="20" height="20" viewBox="0 0 20 20" aria-hidden="true">
            <circle cx="10" cy="10" r="10" fill="#f7931a" />
            <path d="M8 5.500l-1 9M6 6l5 .4c3 .3 2.500 3.400 0 3.400l-3.500-.3M11 9.800c3 .5 2.500 4.200-.5 4.200L6 13.600M10.500 4.500l-.2 2M9.500 14l-.2 2" fill="none" stroke="#fff" strokeWidth="1.600" />
          </svg>
          <PairName>BTC/USDT</PairName>
        </Row>
        <Row $gap={13}>
          <IconButton aria-label="Choose pair"><Icon size={16} w={2} color="#8c8c8c"><circle cx="12" cy="12" r="10.500" stroke="#555" /><path d="M8 10l4 4 4-4" /></Icon></IconButton>
          <svg width="15" height="15" viewBox="0 0 24 24" aria-hidden="true"><circle cx="12" cy="12" r="12" fill="#6a6a6a" /><path d="M12 5v3M9.500 11H12v7M9 18h6" stroke="#111" strokeWidth="2" fill="none" /></svg>
        </Row>
      </PairTitle>
      <PairInfo>
        <LastPrice><b>57,178.7</b>+0.59%&nbsp; +339.5</LastPrice>
        <Stat>24h High<b>58,520.0</b></Stat>
        <Stat>24h Low<b>56,190.9</b></Stat>
        <Stat>24h Amount (BTC)<b>2.01K</b></Stat>
        <Stat>24h Volume (USDT)<b>115.90M</b></Stat>
      </PairInfo>
    </Row>
    <Row $gap={15}>
      <svg width="20" height="16" viewBox="0 0 20 16" fill="none" strokeWidth="1.800" strokeLinecap="round" aria-hidden="true">
        <path d="M1 5.500c5-5 13-5 18 0M4 8.500c3.500-3.500 8.500-3.500 12 0" stroke="#8c8c8c" />
        <path d="M7 11.500c2-1.700 4-1.700 6 0M10 14.500v.1" stroke={GREEN_TEXT} />
      </svg>
      <Divider />
      <ToolLink href="#"><Icon size={17} d="M3 9l9-6 9 6v10a2 2 0 0 1-2 2H5a2 2 0 0 1-2-2zM7 11l5 4 5-4" />News</ToolLink>
      <ToolLink href="#"><Icon size={16} d="M6 2h12a4 4 0 0 1 4 4v12a4 4 0 0 1-4 4H6a4 4 0 0 1-4-4V6a4 4 0 0 1 4-4zM8 10v4M12 8v8M16 10v4" />Trading Info</ToolLink>
      <Divider />
      <IconSet>
        <IconButton aria-label="Guide"><Icon size={20} d="M7 2h13a1.500 1.500 0 0 1 1.500 1.500v17A1.500 1.500 0 0 1 20 22H7a1.500 1.500 0 0 1-1.500-1.500v-17A1.500 1.500 0 0 1 7 2zM3 7h3M3 12h3M3 17h3M11 9a2.500 2.500 0 1 1 3.500 2.300c-1 .5-1 1-1 2.200M13.500 17v.2" w={1.700} /></IconButton>
        <IconButton aria-label="Layout"><Icon size={20} d="M4 2.500h16A1.500 1.500 0 0 1 21.500 4v16a1.500 1.500 0 0 1-1.500 1.500H4A1.500 1.500 0 0 1 2.500 20V4A1.500 1.500 0 0 1 4 2.500zM2.500 8.500h19M14 8.500v13" w={1.700} /></IconButton>
        <IconButton aria-label="Settings"><Icon size={20} d={HEX} w={1.700}><circle cx="12" cy="12" r="3" /></Icon></IconButton>
      </IconSet>
    </Row>
  </PairBar>
);

const PairTitle = styled.div`
  display: flex;
  align-items: center;
  gap: 12px;
  margin-left: 13px;
  > :nth-child(3) { margin-left: -3px; }
`;

const IconSet = styled.div`
  display: flex;
  gap: 15px;
  color: #9a9a9a;
`;

export default function App() {
  return (
    <App_>
      <GlobalStyle />
      <Header />
      <PairHeader />
      <Workspace>
        <ChartPanel />
        <BookPanel />
        <OrderPanel />
        <OrdersPanel />
        <AssetPanel />
      </Workspace>
    </App_>
  );
}
